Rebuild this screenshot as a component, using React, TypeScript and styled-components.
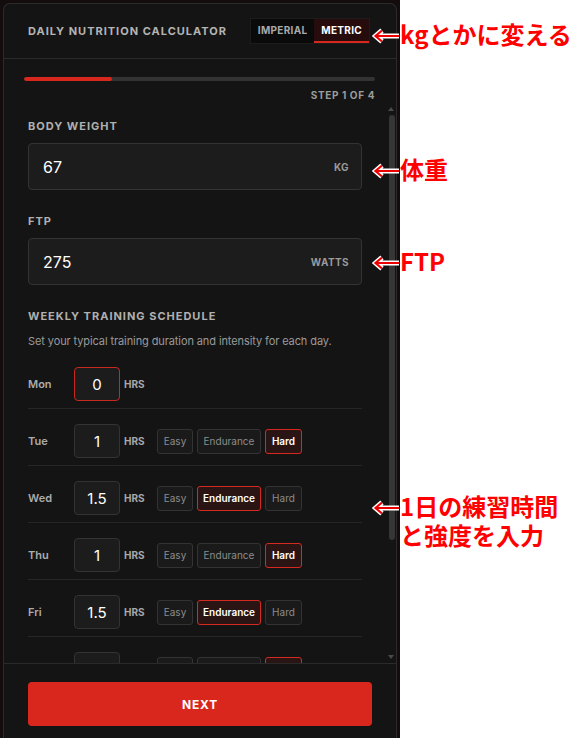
import React from "react";
import styled, { createGlobalStyle } from "styled-components";

const GlobalStyle = createGlobalStyle`
  html, body {
    margin: 0;
    padding: 0;
    background: #ffffff;
  }
  body {
    font-family: Inter, "Noto Sans", sans-serif;
  }
  * {
    box-sizing: border-box;
  }
`;

const Root = styled.div`
  position: relative;
  display: flex;
  width: 570px;
  height: 738px;
  overflow: hidden;
  background: #ffffff;
`;

const Stage = styled.div`
  width: 400px;
  flex: none;
  padding: 3px 3px 0 3px;
  background: #140d0d;
`;

const Panel = styled.div`
  display: flex;
  flex-direction: column;
  background: #141414;
  border: 1px solid #2b2b2b;
  border-bottom: none;
  border-radius: 7px 7px 0 0;
`;

const Header = styled.div`
  display: flex;
  align-items: center;
  justify-content: space-between;
  height: 55px;
  padding: 0 26px 0 24px;
  border-bottom: 1px solid #2a2a2a;
`;

const Title = styled.div`
  font-size: 11px;
  font-weight: 700;
  letter-spacing: 1px;
  color: #b4b4b4;
`;

const Toggle = styled.div`
  display: flex;
  height: 26px;
  border: 1px solid #1c1c1c;
`;

const Segment = styled.div<{ $active?: boolean }>`
  display: flex;
  align-items: center;
  padding: 0 7px;
  font-size: 10px;
  font-weight: 700;
  letter-spacing: 0.3px;
  color: ${(p) => (p.$active ? "#ffffff" : "#a9a9a9")};
  background: ${(p) => (p.$active ? "#260c0c" : "#0a0a0a")};
  border-bottom: 2px solid ${(p) => (p.$active ? "#d8271d" : "transparent")};
`;

const Progress = styled.div`
  height: 44px;
  padding: 18px 21px 0 20px;
`;

const Track = styled.div`
  height: 4px;
  border-radius: 2px;
  background: #333333;
  overflow: hidden;
`;

const Fill = styled.div`
  height: 100%;
  border-radius: 2px;
  background: #d8271d;
`;

const StepText = styled.div`
  margin-top: 8px;
  text-align: right;
  font-size: 10px;
  line-height: 12px;
  font-weight: 700;
  letter-spacing: 0.6px;
  color: #9c9c9c;
`;

const ScrollArea = styled.div`
  display: flex;
  height: 560px;
`;

const Content = styled.div`
  flex: 1;
  min-width: 0;
  overflow: hidden;
  padding: 16px 24px 0 24px;
`;

const Rail = styled.div`
  display: flex;
  flex-direction: column;
  align-items: center;
  width: 10px;
  flex: none;
`;

const RailButton = styled.div<{ $down?: boolean }>`
  display: flex;
  align-items: center;
  justify-content: center;
  height: 12px;
  width: 100%;

  &::before {
    content: "";
    width: 0;
    height: 0;
    border-left: 3px solid transparent;
    border-right: 3px solid transparent;
    ${(p) =>
      p.$down
        ? "border-top: 4px solid #4a4a4a;"
        : "border-bottom: 4px solid #4a4a4a;"}
  }
`;

const RailTrack = styled.div`
  flex: 1;
  width: 100%;
  padding-left: 3px;
  padding-right: 1px;
`;

const Thumb = styled.div`
  height: 425px;
  border-radius: 3px;
  background: #363636;
`;

const Field = styled.div`
  margin-bottom: 24px;
`;

const Label = styled.div`
  font-size: 11px;
  line-height: 14px;
  font-weight: 700;
  letter-spacing: 1px;
  color: #b0b0b0;
`;

const InputBox = styled.div`
  display: flex;
  align-items: center;
  justify-content: space-between;
  height: 47px;
  margin-top: 10px;
  padding: 0 12px 0 14px;
  background: #1c1c1c;
  border: 1px solid #333333;
  border-radius: 4px;
`;

const Value = styled.span`
  font-size: 16px;
  color: #ffffff;
`;

const Unit = styled.span`
  font-size: 10px;
  font-weight: 700;
  letter-spacing: 0.4px;
  color: #9a9a9a;
`;

const Hint = styled.div`
  margin: 10px 0 3px;
  font-size: 11px;
  line-height: 16px;
  letter-spacing: -0.1px;
  color: #9a9a9a;
`;

const DayRow = styled.div`
  display: flex;
  align-items: center;
  padding: 15px 0 7px;
  border-bottom: 1px solid #262626;
`;

const DayName = styled.span`
  width: 46px;
  font-size: 11px;
  font-weight: 600;
  color: #acacac;
`;

const HoursBox = styled.div<{ $focus?: boolean }>`
  display: flex;
  align-items: center;
  justify-content: center;
  width: 46px;
  height: 34px;
  font-size: 15px;
  color: #ffffff;
  background: #1c1c1c;
  border: 1px solid ${(p) => (p.$focus ? "#c8291f" : "#333333")};
  border-radius: 4px;
`;

const Hrs = styled.span`
  width: 37px;
  padding-left: 4px;
  font-size: 10px;
  font-weight: 700;
  color: #a8a8a8;
`;

const Pills = styled.div`
  display: grid;
  grid-template-columns: 36px 64px 37px;
  gap: 4px;
`;

const Pill = styled.div<{ $on?: boolean }>`
  display: flex;
  align-items: center;
  justify-content: center;
  height: 25px;
  font-size: 10px;
  font-weight: ${(p) => (p.$on ? 600 : 400)};
  color: ${(p) => (p.$on ? "#ffffff" : "#8c8c8c")};
  background: ${(p) => (p.$on ? "#2a1414" : "#1a1a1a")};
  border: 1px solid ${(p) => (p.$on ? "#d42a20" : "#333333")};
  border-radius: 3px;
`;

const Footer = styled.div`
  padding: 18px 24px 22px;
  background: #141414;
  border-top: 1px solid #2a2a2a;
`;

const NextButton = styled.button`
  display: block;
  width: 100%;
  height: 44px;
  border: none;
  border-radius: 4px;
  background: #d9271d;
  color: #ffffff;
  font-family: Inter, sans-serif;
  font-size: 12px;
  font-weight: 700;
  letter-spacing: 0.8px;
`;

const Notes = styled.div`
  flex: 1;
  background: #ffffff;
`;

const Callout = styled.div`
  position: absolute;
  left: 372px;
  display: flex;
  align-items: flex-start;
`;

const CalloutText = styled.div`
  margin-top: -2px;
  font-family: "Noto Sans CJK JP", "Noto Sans", sans-serif;
  font-size: 24px;
  line-height: 29px;
  font-weight: 700;
  color: #ff0000;
  white-space: nowrap;
`;

const ArrowWrap = styled.span`
  display: flex;
  align-items: center;
  height: 29px;
`;

const Arrow = () => (
  <ArrowWrap>
    <svg width="28" height="16" viewBox="0 0 28 16">
      <path
        d="M27 8 H4 M10 2.5 L3.5 8 L10 13.5"
        fill="none"
        stroke="#ffffff"
        strokeWidth="5"
      />
      <path
        d="M27 8 H4 M10 2.5 L3.5 8 L10 13.5"
        fill="none"
        stroke="#ee0000"
        strokeWidth="2.2"
      />
    </svg>
  </ArrowWrap>
);

type Level = "Easy" | "Endurance" | "Hard";

const schedule: { day: string; hours: string; level?: Level }[] = [
  { day: "Mon", hours: "0" },
  { day: "Tue", hours: "1", level: "Hard" },
  { day: "Wed", hours: "1.5", level: "Endurance" },
  { day: "Thu", hours: "1", level: "Hard" },
  { day: "Fri", hours: "1.5", level: "Endurance" },
  { day: "Sat", hours: "2", level: "Hard" },
  { day: "Sun", hours: "0" },
];

const levels: Level[] = ["Easy", "Endurance", "Hard"];

export default function App() {
  const step = 1;
  const totalSteps = 4;

  return (
    <Root>
      <GlobalStyle />
      <Stage>
        <Panel>
          <Header>
            <Title>DAILY NUTRITION CALCULATOR</Title>
            <Toggle>
              <Segment>IMPERIAL</Segment>
              <Segment $active>METRIC</Segment>
            </Toggle>
          </Header>

          <Progress>
            <Track>
              <Fill style={{ width: `${(step / totalSteps) * 100}%` }} />
            </Track>
            <StepText>
              STEP {step} OF {totalSteps}
            </StepText>
          </Progress>

          <ScrollArea>
            <Content>
              <Field>
                <Label>BODY WEIGHT</Label>
                <InputBox>
                  <Value>67</Value>
                  <Unit>KG</Unit>
                </InputBox>
              </Field>
              <Field>
                <Label>FTP</Label>
                <InputBox>
                  <Value>275</Value>
                  <Unit>WATTS</Unit>
                </InputBox>
              </Field>

              <Label>WEEKLY TRAINING SCHEDULE</Label>
              <Hint>Set your typical training duration and intensity for each day.</Hint>

              {schedule.map((d, i) => (
                <DayRow key={d.day}>
                  <DayName>{d.day}</DayName>
                  <HoursBox $focus={i === 0}>{d.hours}</HoursBox>
                  <Hrs>HRS</Hrs>
                  {d.level && (
                    <Pills>
                      {levels.map((l) => (
                        <Pill key={l} $on={l === d.level}>
                          {l}
                        </Pill>
                      ))}
                    </Pills>
                  )}
                </DayRow>
              ))}
            </Content>
            <Rail>
              <RailButton />
              <RailTrack>
                <Thumb />
              </RailTrack>
              <RailButton $down />
            </Rail>
          </ScrollArea>

          <Footer>
            <NextButton>NEXT</NextButton>
          </Footer>
        </Panel>
      </Stage>
      <Notes />

      <Callout style={{ top: 21 }}>
        <Arrow />
        <CalloutText>kgとかに変える</CalloutText>
      </Callout>
      <Callout style={{ top: 156 }}>
        <Arrow />
        <CalloutText>体重</CalloutText>
      </Callout>
      <Callout style={{ top: 248 }}>
        <Arrow />
        <CalloutText>FTP</CalloutText>
      </Callout>
      <Callout style={{ top: 493 }}>
        <Arrow />
        <CalloutText>
          1日の練習時間
          <br />
          と強度を入力
        </CalloutText>
      </Callout>
    </Root>
  );
}
